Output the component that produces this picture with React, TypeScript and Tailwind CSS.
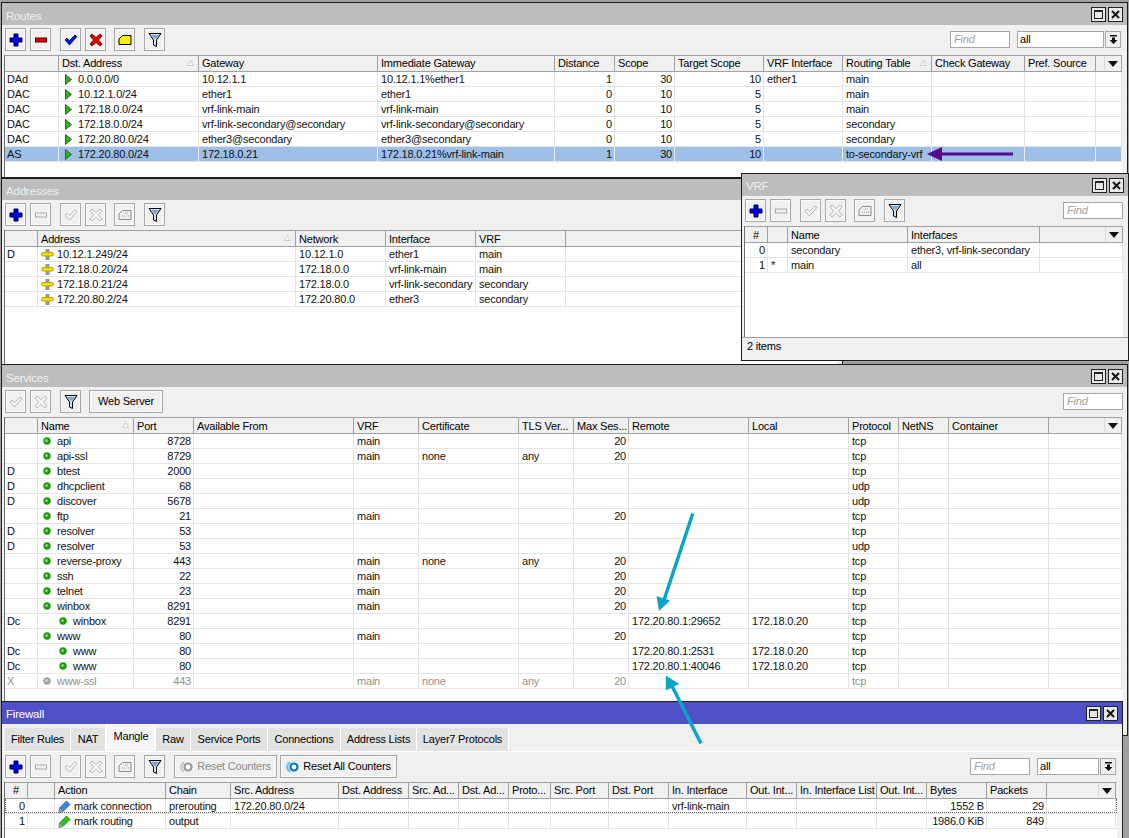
import type { ReactNode } from 'react';

type Col = { label?: string; w: number; right?: boolean; sort?: boolean; menu?: boolean };
type Row = { cells: ReactNode[]; selected?: boolean; off?: boolean; dotted?: boolean };

// toolbar glyphs
const Plus = () => (
  <svg width="14" height="14" viewBox="0 0 14 14"><path d="M5 1h4v4h4v4H9v4H5V9H1V5h4z" fill="#0000e6" stroke="#000044" strokeWidth="1" /></svg>
);
const Minus = ({ off }: { off?: boolean }) => (
  <svg width="14" height="14" viewBox="0 0 14 14"><rect x="1.5" y="5" width="11" height="4" fill={off ? '#f0f0f0' : '#e60000'} stroke={off ? '#a8a8a8' : '#600000'} /></svg>
);
const Check = ({ off }: { off?: boolean }) => (
  <svg width="14" height="14" viewBox="0 0 14 14"><path d="M1 7l2-2 2.500 2.500L11 2l2 1.500L5.500 12z" fill={off ? '#f4f4f4' : '#0018d8'} stroke={off ? '#a8a8a8' : '#000060'} strokeWidth="0.8" /></svg>
);
const Cross = ({ off }: { off?: boolean }) => (
  <svg width="14" height="14" viewBox="0 0 14 14"><path d="M1 3l2-2 4 3.500L11 1l2 2-3.500 4L13 11l-2 2-4-3.500L3 13l-2-2 3.500-4z" fill={off ? '#f4f4f4' : '#e60000'} stroke={off ? '#a8a8a8' : '#300000'} strokeWidth="0.8" /></svg>
);
const Note = ({ off }: { off?: boolean }) => (
  <svg width="14" height="12" viewBox="0 0 14 12">
    <path d="M4.500 1.500h8.500v9H1V5z" fill={off ? '#f0f0f0' : '#f8f000'} stroke={off ? '#8c8c8c' : '#000'} />
    {off && <path d="M7 4h4M4 7h7" stroke="#9a9a9a" strokeDasharray="1 1" />}
  </svg>
);
const Funnel = () => (
  <svg width="14" height="16" viewBox="0 0 14 16">
    <path d="M1 1.500h12L8.500 8v6.500l-3-1.500V8z" fill="#cfe0f4" stroke="#000" strokeWidth="1" />
    <path d="M3 3h8L8.200 6.500H5.800z" fill="#7fa6d8" />
  </svg>
);
const Ring = ({ off }: { off?: boolean }) => (
  <svg width="14" height="12" viewBox="0 0 14 12">
    <path d="M4 1.500A5 5 0 0 0 4 10.500" fill="none" stroke={off ? '#c8c8c8' : '#70b8e8'} strokeWidth="2" />
    <circle cx="8" cy="6" r="3.500" fill="#fff" stroke={off ? '#9a9a9a' : '#0078d0'} strokeWidth="2.200" />
  </svg>
);
const Tri = () => (
  <svg width="7" height="11" viewBox="0 0 7 11" className="shrink-0"><path d="M.5.500l6 5-6 5z" fill="#2fb01e" stroke="#1c4a14" strokeWidth="0.8" /></svg>
);
const Addr = () => (
  <svg width="13" height="11" viewBox="0 0 13 11" className="shrink-0">
    <rect x="4.500" y="0" width="4" height="11" fill="#8f9a94" />
    <rect x="0.500" y="3.500" width="12" height="3.500" rx="1.500" fill="#f2df00" stroke="#b8a800" />
  </svg>
);
const Dot = ({ off }: { off?: boolean }) => (
  <svg width="8" height="8" viewBox="0 0 8 8" className="shrink-0">
    <circle cx="4" cy="4" r="3.700" fill={off ? '#a0a0a0' : '#1f9a10'} />
    <circle cx="3.500" cy="3.500" r="1.500" fill={off ? '#d8d8d8' : '#7fdc60'} />
  </svg>
);
const Pencil = ({ fill, edge }: { fill: string; edge: string }) => (
  <svg width="13" height="13" viewBox="0 0 13 13" className="shrink-0">
    <path d="M8.500 1l3.500 3.500-7 7L1 12.500 1.500 8z" fill={fill} stroke={edge} strokeWidth="0.7" />
    <path d="M1.500 8L5 11.500 1 12.500z" fill="#9a9a9a" />
  </svg>
);

const Btn = ({ children, className = 'w-[21px]' }: { children: ReactNode; className?: string }) => (
  <div className={`${className} h-[23px] shrink-0 flex items-center justify-center border border-[#a6a6a6] bg-[#f0f0f0] shadow-[inset_0_0_0_1px_#fafafa]`}>
    {children}
  </div>
);

const Find = () => (
  <div className="w-[60px] h-[17px] border border-[#a6a6a6] bg-white pl-[3px] text-[#a0a0a0] italic leading-[15px]">Find</div>
);

const Caret = () => (
  <svg width="10" height="6" viewBox="0 0 10 6"><path d="M0 0h10L5 6z" fill="#111" /></svg>
);

const AllSelect = ({ w }: { w: string }) => (
  <div className="flex gap-px ml-[7px]">
    <div className={`${w} h-[17px] border border-[#a6a6a6] bg-white pl-[2px] leading-[15px]`}>all</div>
    <div className="w-[16px] h-[17px] border border-[#a6a6a6] flex items-center justify-center">
      <svg width="9" height="9" viewBox="0 0 9 9"><path d="M1 0h7v1.500H1zM3 2.500h3V5h2.500L4.500 9 .5 5H3z" fill="#111" /></svg>
    </div>
  </div>
);

const SortMark = () => (
  <svg width="7" height="6" viewBox="0 0 7 6" className="absolute right-[4px] top-[4px]"><path d="M3.500.500L6.500 5.500h-6z" fill="#f8f8f8" stroke="#c4c4c4" strokeWidth="0.8" /></svg>
);

const List = ({ cols, rows, lowHead }: { cols: Col[]; rows: Row[]; lowHead?: boolean }) => {
  const template = cols.map((c) => `${c.w}px`).join(' ');
  return (
    <div className="flex-1 min-h-0 bg-white border-l border-[#6e6e6e]">
      <div className="grid h-[17px] bg-[#f0f0f0] border-y border-[#a0a0a0]" style={{ gridTemplateColumns: template }}>
        {cols.map((c, i) => (
          <div
            key={i}
            className={`relative flex items-center border-r border-[#a0a0a0] leading-[15px] whitespace-nowrap overflow-hidden ${lowHead ? 'pt-[2px]' : ''} ${c.label === '#' ? 'justify-center' : 'pl-[3px]'}`}
          >
            {c.label}
            {c.sort && <SortMark />}
            {c.menu && (
              <div className="absolute right-0 top-0 bottom-0 w-[17px] bg-[#f0f0f0] border-l border-[#d8d8d8] flex items-center justify-center">
                <Caret />
              </div>
            )}
          </div>
        ))}
      </div>
      {rows.map((r, i) => (
        <div
          key={i}
          className={`relative grid h-[15px] border-b border-[#e4e4e4] ${r.selected ? 'bg-[#9dbfe8]' : ''} ${r.off ? 'text-[#909090]' : 'text-[#111]'}`}
          style={{ gridTemplateColumns: template }}
        >
          {cols.map((c, j) => (
            <div
              key={j}
              className={`flex items-center border-r ${r.selected ? 'border-[#e8eef8]' : 'border-[#e4e4e4]'} leading-[14px] whitespace-nowrap overflow-hidden ${c.right ? 'justify-end pr-[2px]' : j === 0 ? 'pl-[2px]' : 'pl-[3px]'}`}
            >
              {r.cells[j]}
            </div>
          ))}
          {r.dotted && <div className="absolute inset-0 border border-t-0 border-dotted border-[#666]" />}
        </div>
      ))}
    </div>
  );
};

const WinButtons = () => (
  <div className="flex gap-[2px] mr-[4px]">
    <div className="w-[15px] h-[15px] border border-[#222] bg-[#e8e8e8] flex items-center justify-center">
      <div className="w-[9px] h-[9px] border border-[#222] border-t-2" />
    </div>
    <div className="w-[15px] h-[15px] border border-[#222] bg-[#e8e8e8] flex items-center justify-center">
      <svg width="9" height="9" viewBox="0 0 9 9"><path d="M1 1l7 7M8 1L1 8" stroke="#111" strokeWidth="2" /></svg>
    </div>
  </div>
);

const Win = ({
  title,
  frame,
  titleClass = 'h-[22px] bg-[#bdbdbd] text-[#efefef]',
  titlePad = 'pt-[6px]',
  children,
}: {
  title: string;
  frame: string;
  titleClass?: string;
  titlePad?: string;
  children: ReactNode;
}) => (
  <div className={`absolute ${frame} flex flex-col border border-[#1c1c1c] bg-[#f0f0f0] overflow-hidden`}>
    <div className={`${titleClass} shrink-0 flex items-center justify-between pl-[4px]`}>
      <span className={`${titlePad} text-[11.5px]`}>{title}</span>
      <WinButtons />
    </div>
    {children}
  </div>
);

const Toolbar = ({ children }: { children: ReactNode }) => (
  <div className="h-[30px] shrink-0 flex items-start pt-[3px] pl-[3px] pr-[6px]">{children}</div>
);

const Body = ({ children }: { children: ReactNode }) => (
  <div className="flex-1 min-h-0 flex flex-col pl-[2px] pr-[5px]">{children}</div>
);

const FullTools = () => (
  <>
    <Btn><Plus /></Btn>
    <div className="ml-[4px]"><Btn><Minus off /></Btn></div>
    <div className="ml-[9px]"><Btn><Check off /></Btn></div>
    <div className="ml-[4px]"><Btn><Cross off /></Btn></div>
    <div className="ml-[8px]"><Btn><Note off /></Btn></div>
    <div className="ml-[9px]"><Btn><Funnel /></Btn></div>
  </>
);

const tri = (t: string) => (
  <span className="flex items-center gap-[6px] pl-[3px]"><Tri />{t}</span>
);
const addr = (t: string) => (
  <span className="flex items-center gap-[3px]"><Addr />{t}</span>
);
const svc = (t: string, child?: boolean, off?: boolean) => (
  <span className={`flex items-center gap-[6px] ${child ? 'pl-[18px]' : 'pl-[2px]'}`}><Dot off={off} />{t}</span>
);
const act = (t: string, fill: string, edge: string) => (
  <span className="flex items-center gap-[3px]"><Pencil fill={fill} edge={edge} />{t}</span>
);

const routeCols: Col[] = [
  { w: 54 }, { label: 'Dst. Address', w: 140, sort: true }, { label: 'Gateway', w: 179 },
  { label: 'Immediate Gateway', w: 177 }, { label: 'Distance', w: 60, right: true }, { label: 'Scope', w: 60, right: true },
  { label: 'Target Scope', w: 89, right: true }, { label: 'VRF Interface', w: 79 }, { label: 'Routing Table', w: 89, sort: true },
  { label: 'Check Gateway', w: 93 }, { label: 'Pref. Source', w: 71 }, { w: 26, menu: true },
];
const routeRows: Row[] = [
  { cells: ['DAd', tri('0.0.0.0/0'), '10.12.1.1', '10.12.1.1%ether1', '1', '30', '10', 'ether1', 'main'] },
  { cells: ['DAC', tri('10.12.1.0/24'), 'ether1', 'ether1', '0', '10', '5', '', 'main'] },
  { cells: ['DAC', tri('172.18.0.0/24'), 'vrf-link-main', 'vrf-link-main', '0', '10', '5', '', 'main'] },
  { cells: ['DAC', tri('172.18.0.0/24'), 'vrf-link-secondary@secondary', 'vrf-link-secondary@secondary', '0', '10', '5', '', 'secondary'] },
  { cells: ['DAC', tri('172.20.80.0/24'), 'ether3@secondary', 'ether3@secondary', '0', '10', '5', '', 'secondary'] },
  { selected: true, cells: ['AS', tri('172.20.80.0/24'), '172.18.0.21', '172.18.0.21%vrf-link-main', '1', '30', '10', '', 'to-secondary-vrf'] },
];

const addrCols: Col[] = [
  { w: 33 }, { label: 'Address', w: 258, sort: true }, { label: 'Network', w: 90 }, { label: 'Interface', w: 90 },
  { label: 'VRF', w: 90 }, { w: 400 },
];
const addrRows: Row[] = [
  { cells: ['D', addr('10.12.1.249/24'), '10.12.1.0', 'ether1', 'main'] },
  { cells: ['', addr('172.18.0.20/24'), '172.18.0.0', 'vrf-link-main', 'main'] },
  { cells: ['', addr('172.18.0.21/24'), '172.18.0.0', 'vrf-link-secondary', 'secondary'] },
  { cells: ['', addr('172.20.80.2/24'), '172.20.80.0', 'ether3', 'secondary'] },
];

const vrfCols: Col[] = [
  { label: '#', w: 23, right: true }, { w: 20 }, { label: 'Name', w: 120 }, { label: 'Interfaces', w: 132 }, { w: 83, menu: true },
];
const vrfRows: Row[] = [
  { cells: ['0', '', 'secondary', 'ether3, vrf-link-secondary'] },
  { cells: ['1', '*', 'main', 'all'] },
];

const svcCols: Col[] = [
  { w: 33 }, { label: 'Name', w: 96, sort: true }, { label: 'Port', w: 60, right: true }, { label: 'Available From', w: 160 },
  { label: 'VRF', w: 65 }, { label: 'Certificate', w: 100 }, { label: 'TLS Ver...', w: 55 }, { label: 'Max Ses...', w: 55, right: true },
  { label: 'Remote', w: 120 }, { label: 'Local', w: 100 }, { label: 'Protocol', w: 50 }, { label: 'NetNS', w: 50 },
  { label: 'Container', w: 100 }, { w: 73, menu: true },
];
const svc1 = (flag: string, name: ReactNode, port: string, vrf = '', cert = '', tls = '', max = '', remote = '', local = '', proto = 'tcp'): ReactNode[] =>
  [flag, name, port, '', vrf, cert, tls, max, remote, local, proto];
const svcRows: Row[] = [
  { cells: svc1('', svc('api'), '8728', 'main', '', '', '20') },
  { cells: svc1('', svc('api-ssl'), '8729', 'main', 'none', 'any', '20') },
  { cells: svc1('D', svc('btest'), '2000') },
  { cells: svc1('D', svc('dhcpclient'), '68', '', '', '', '', '', '', 'udp') },
  { cells: svc1('D', svc('discover'), '5678', '', '', '', '', '', '', 'udp') },
  { cells: svc1('', svc('ftp'), '21', 'main', '', '', '20') },
  { cells: svc1('D', svc('resolver'), '53') },
  { cells: svc1('D', svc('resolver'), '53', '', '', '', '', '', '', 'udp') },
  { cells: svc1('', svc('reverse-proxy'), '443', 'main', 'none', 'any', '20') },
  { cells: svc1('', svc('ssh'), '22', 'main', '', '', '20') },
  { cells: svc1('', svc('telnet'), '23', 'main', '', '', '20') },
  { cells: svc1('', svc('winbox'), '8291', 'main', '', '', '20') },
  { cells: svc1('Dc', svc('winbox', true), '8291', '', '', '', '', '172.20.80.1:29652', '172.18.0.20') },
  { cells: svc1('', svc('www'), '80', 'main', '', '', '20') },
  { cells: svc1('Dc', svc('www', true), '80', '', '', '', '', '172.20.80.1:2531', '172.18.0.20') },
  { cells: svc1('Dc', svc('www', true), '80', '', '', '', '', '172.20.80.1:40046', '172.18.0.20') },
  { off: true, cells: svc1('X', svc('www-ssl', false, true), '443', 'main', 'none', 'any', '20') },
];

const fwCols: Col[] = [
  { label: '#', w: 23, right: true }, { w: 27 }, { label: 'Action', w: 111 }, { label: 'Chain', w: 65 }, { label: 'Src. Address', w: 108 },
  { label: 'Dst. Address', w: 70 }, { label: 'Src. Ad...', w: 50 }, { label: 'Dst. Ad...', w: 50 }, { label: 'Proto...', w: 42 },
  { label: 'Src. Port', w: 58 }, { label: 'Dst. Port', w: 60 }, { label: 'In. Interface', w: 78 }, { label: 'Out. Int...', w: 50 },
  { label: 'In. Interface List', w: 80 }, { label: 'Out. Int...', w: 50 }, { label: 'Bytes', w: 60, right: true }, { label: 'Packets', w: 60, right: true },
  { w: 69, menu: true },
];
const fwRows: Row[] = [
  { dotted: true, cells: ['0', '', act('mark connection', '#3f86d8', '#1c4a88'), 'prerouting', '172.20.80.0/24', '', '', '', '', '', '', 'vrf-link-main', '', '', '', '1552 B', '29'] },
  { cells: ['1', '', act('mark routing', '#2fc21e', '#14700c'), 'output', '', '', '', '', '', '', '', '', '', '', '', '1986.0 KiB', '849'] },
];

const tabs = [
  { t: 'Filter Rules', w: 'w-[66px]' }, { t: 'NAT', w: 'w-[35px]' }, { t: 'Mangle', w: 'w-[50px]', on: true }, { t: 'Raw', w: 'w-[35px]' },
  { t: 'Service Ports', w: 'w-[77px]' }, { t: 'Connections', w: 'w-[73px]' }, { t: 'Address Lists', w: 'w-[76px]' }, { t: 'Layer7 Protocols', w: 'w-[92px]' },
];

export default function App() {
  return (
    <div className="relative w-[1129px] h-[838px] overflow-hidden bg-[#a0a0a0] text-black text-[11px] tracking-[-0.2px] font-['Liberation_Sans',Arial,sans-serif]">
      <Win title="Routes" frame="left-[1px] top-[2px] w-[1127px] h-[176px]">
        <Toolbar>
          <Btn><Plus /></Btn>
          <div className="ml-[4px]"><Btn><Minus /></Btn></div>
          <div className="ml-[9px]"><Btn><Check /></Btn></div>
          <div className="ml-[4px]"><Btn><Cross /></Btn></div>
          <div className="ml-[8px]"><Btn><Note /></Btn></div>
          <div className="ml-[9px]"><Btn><Funnel /></Btn></div>
          <div className="ml-auto mt-[3px] flex">
            <Find />
            <AllSelect w="w-[87px]" />
          </div>
        </Toolbar>
        <Body><List cols={routeCols} rows={routeRows} /></Body>
      </Win>

      <Win title="Addresses" frame="left-[1px] top-[178px] w-[842px] h-[187px]" titleClass="h-[21px] bg-[#bdbdbd] text-[#efefef]" titlePad="pt-[4px]">
        <Toolbar><FullTools /></Toolbar>
        <Body><List cols={addrCols} rows={addrRows} lowHead /></Body>
      </Win>

      <Win title="Services" frame="left-[1px] top-[364px] w-[1127px] h-[372px]">
        <Toolbar>
          <Btn><Check off /></Btn>
          <div className="ml-[4px]"><Btn><Cross off /></Btn></div>
          <div className="ml-[9px]"><Btn><Funnel /></Btn></div>
          <div className="ml-[8px]"><Btn className="w-[74px]">Web Server</Btn></div>
          <div className="ml-auto mt-[3px] -mr-[2px]"><Find /></div>
        </Toolbar>
        <Body><List cols={svcCols} rows={svcRows} lowHead /></Body>
      </Win>

      <Win title="VRF" frame="left-[741px] top-[173px] w-[388px] h-[188px]" titlePad="pt-[4px]">
        <Toolbar>
          <FullTools />
          <div className="ml-auto mt-[3px] -mr-px"><Find /></div>
        </Toolbar>
        <Body><List cols={vrfCols} rows={vrfRows} lowHead /></Body>
        <div className="h-[23px] shrink-0 flex items-center pl-[5px] pb-[5px] border-t border-[#a0a0a0]">2 items</div>
      </Win>

      <Win title="Firewall" frame="left-[1px] top-[701px] w-[1122px] h-[140px]" titleClass="h-[22px] bg-[#4f50c8] text-white" titlePad="pt-[4px]">
        <div className="h-[28px] shrink-0 flex items-end pl-[3px] border-b border-white">
          {tabs.map((tab) => (
            <div
              key={tab.t}
              className={`${tab.w} flex items-center justify-center whitespace-nowrap border-r border-white ${tab.on ? 'h-[27px] pb-[3px] bg-[#f5f5f5] border-t border-l border-[#fafafa]' : 'h-[23px] bg-[#e2e2e2]'}`}
            >
              {tab.t}
            </div>
          ))}
        </div>
        <Toolbar>
          <FullTools />
          <div className="ml-[9px]"><Btn className="w-[103px] gap-[3px] text-[#8a8a8a]"><Ring off />Reset Counters</Btn></div>
          <div className="ml-[3px]"><Btn className="w-[117px] gap-[3px]"><Ring />Reset All Counters</Btn></div>
          <div className="ml-auto mt-[3px] flex">
            <Find />
            <AllSelect w="w-[62px]" />
          </div>
        </Toolbar>
        <Body><List cols={fwCols} rows={fwRows} /></Body>
      </Win>

      {/* annotation arrows drawn over the windows */}
      <svg className="absolute inset-0 pointer-events-none" width="1129" height="838" viewBox="0 0 1129 838">
        <path d="M1013 154H936" stroke="#5a0a8c" strokeWidth="3" />
        <path d="M927 154l15-7v14z" fill="#5a0a8c" />
        <path d="M692.800 513.500L664 600" stroke="#0aa6c9" strokeWidth="3.500" />
        <path d="M659 611l-2.500-15 13.500 4.500z" fill="#0aa6c9" />
        <path d="M701 743.500L671 684" stroke="#0aa6c9" strokeWidth="3.500" />
        <path d="M665.800 675.500l0 15 13.500-6.500z" fill="#0aa6c9" />
      </svg>
    </div>
  );
}
